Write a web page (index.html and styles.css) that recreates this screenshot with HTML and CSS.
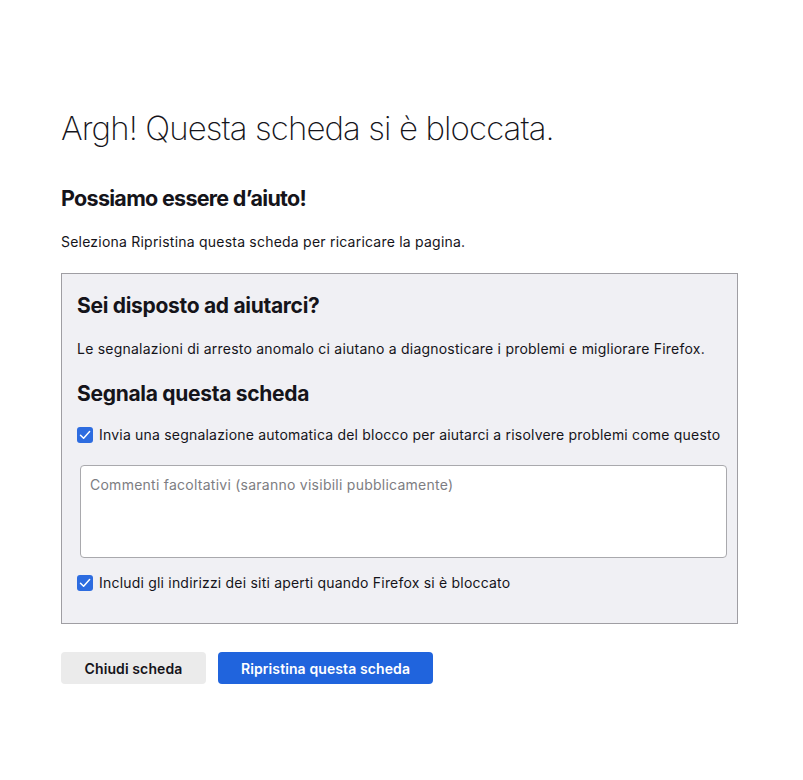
FILE: index.html
```html
<!DOCTYPE html>
<html lang="it">
<head>
<meta charset="utf-8">
<title>Scheda bloccata</title>
<link rel="stylesheet" href="styles.css">
</head>
<body>
<main class="page">
  <h1 class="title">Argh! Questa scheda si è bloccata.</h1>
  <h2 class="subtitle">Possiamo essere d’aiuto!</h2>
  <p class="lead">Seleziona Ripristina questa scheda per ricaricare la pagina.</p>

  <section class="report">
    <h3 class="report-title">Sei disposto ad aiutarci?</h3>
    <p class="report-text">Le segnalazioni di arresto anomalo ci aiutano a diagnosticare i problemi e migliorare Firefox.</p>
    <h3 class="report-title report-title-2">Segnala questa scheda</h3>
    <label class="check">
      <span class="box"><svg viewBox="0 0 16 16" width="16" height="16"><path d="M3.5 8.2 L6.6 11.2 L12.6 4.6" fill="none" stroke="#fff" stroke-width="1.5" stroke-linecap="round" stroke-linejoin="round"/></svg></span>
      <span class="check-text">Invia una segnalazione automatica del blocco per aiutarci a risolvere problemi come questo</span>
    </label>
    <textarea class="comments" placeholder="Commenti facoltativi (saranno visibili pubblicamente)"></textarea>
    <label class="check check-2">
      <span class="box"><svg viewBox="0 0 16 16" width="16" height="16"><path d="M3.5 8.2 L6.6 11.2 L12.6 4.6" fill="none" stroke="#fff" stroke-width="1.5" stroke-linecap="round" stroke-linejoin="round"/></svg></span>
      <span class="check-text">Includi gli indirizzi dei siti aperti quando Firefox si è bloccato</span>
    </label>
  </section>

  <div class="actions">
    <button class="btn btn-close">Chiudi scheda</button>
    <button class="btn btn-restore">Ripristina questa scheda</button>
  </div>
</main>
</body>
</html>
```

FILE: styles.css
```css
html, body {
  margin: 0;
  padding: 0;
  background: #ffffff;
}
body {
  font-family: Inter, "Noto Sans", sans-serif;
  color: #15141a;
}
.page {
  width: 677px;
  padding: 103px 0 0 61px;
}
.title {
  margin: 0;
  font-size: 33px;
  font-weight: 200;
  line-height: 50px;
  letter-spacing: -0.9px;
  color: #15141a;
}
.subtitle {
  margin: 30px 0 0;
  font-size: 21.5px;
  font-weight: 700;
  line-height: 30px;
  letter-spacing: -0.7px;
}
.lead {
  margin: 19px 0 0;
  font-size: 14px;
  line-height: 20px;
  letter-spacing: 0.22px;
}
.report {
  margin-top: 21px;
  background: #f0f0f4;
  border: 1px solid #9f9ea3;
  padding: 18px 15px 30px 15px;
}
.report-title {
  margin: 0;
  font-size: 21px;
  font-weight: 700;
  line-height: 28px;
  letter-spacing: -0.3px;
}
.report-text {
  margin: 19px 0 0;
  font-size: 14px;
  line-height: 20px;
  letter-spacing: 0.22px;
}
.report-title-2 {
  margin-top: 21px;
}
.check {
  display: flex;
  align-items: center;
  gap: 6px;
  margin-top: 17px;
  font-size: 14px;
  line-height: 20px;
  letter-spacing: 0.2px;
  white-space: nowrap;
}
.box {
  width: 16px;
  height: 16px;
  border-radius: 3px;
  background: #2d6ce0;
  display: flex;
  flex: none;
}
.comments {
  display: block;
  box-sizing: border-box;
  width: 647px;
  height: 93px;
  margin: 20px 0 0 3px;
  padding: 10px 9px;
  border: 1px solid #a9a9ad;
  border-radius: 4px;
  background: #fff;
  font-family: Inter, "Noto Sans", sans-serif;
  font-size: 14px;
  letter-spacing: 0.25px;
  resize: none;
}
.comments::placeholder {
  color: #7d7d82;
}
.check-2 {
  margin-top: 15px;
}
.actions {
  display: flex;
  gap: 12px;
  margin-top: 28px;
}
.btn {
  height: 32px;
  border: none;
  border-radius: 4px;
  font-family: Inter, "Noto Sans", sans-serif;
  font-size: 14px;
  font-weight: 600;
  letter-spacing: 0.1px;
  padding: 0;
}
.btn-close {
  width: 145px;
  background: #ebebeb;
  color: #15141a;
}
.btn-restore {
  width: 215px;
  background: #2064dd;
  color: #fff;
}
```
